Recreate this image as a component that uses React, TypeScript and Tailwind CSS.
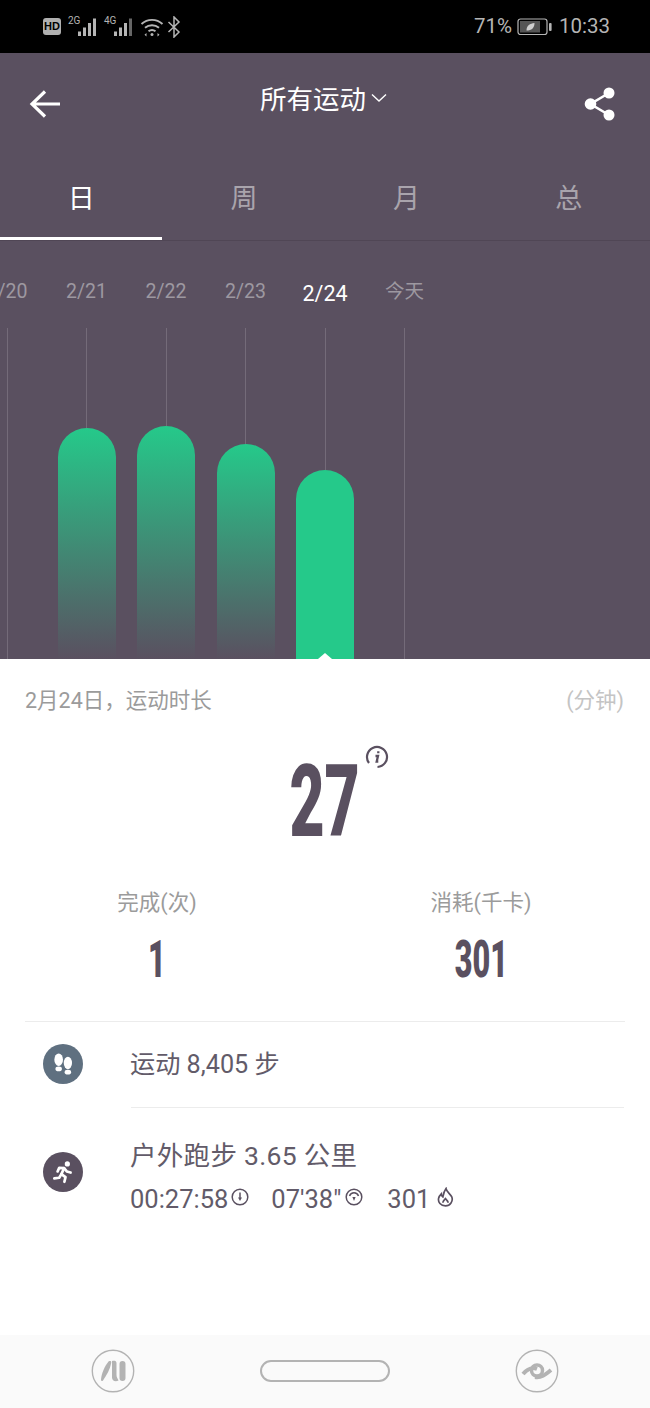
import React from "react";

const FONT = "font-['Roboto','Noto_Sans_CJK_SC',sans-serif]";

type Day = { label: string; bar?: number; active?: boolean };

const days: Day[] = [
  { label: "2/20" },
  { label: "2/21", bar: 231 },
  { label: "2/22", bar: 233 },
  { label: "2/23", bar: 215 },
  { label: "2/24", bar: 189, active: true },
  { label: "今天" },
];

function Signal({ tag, dim }: { tag: string; dim?: boolean }) {
  return (
    <div className="flex items-end h-[20px] relative w-[30px]">
      <span className="absolute left-0 -top-[1px] text-[10px] leading-[10px] text-[#b5b5b5] font-['Liberation_Sans_Narrow','Roboto',sans-serif]">
        {tag}
      </span>
      <svg width="30" height="20" viewBox="0 0 30 20" fill="#b5b5b5">
        <rect x="10" y="14.500" width="3" height="4.500" />
        <rect x="15" y="10.500" width="3" height="8.500" />
        <rect x="20" y="6" width="3" height="13" />
        <rect x="25" y="1.500" width="3" height="17.500" fill={dim ? "#666" : "#b5b5b5"} />
      </svg>
    </div>
  );
}

function StatusBar() {
  return (
    <div className="h-[53px] bg-black flex items-center justify-between pl-[43px] pr-[40px] text-[#b5b5b5]">
      <div className="flex items-center">
        <span className="w-[18px] h-[17px] bg-[#b0b0b0] rounded-[3px] text-black text-[11px] leading-[17px] font-bold text-center font-['Liberation_Sans',sans-serif]">
          HD
        </span>
        <div className="ml-[7px] flex gap-[6px]">
          <Signal tag="2G" />
          <Signal tag="4G" dim />
        </div>
        <svg className="ml-[6px]" width="24" height="20" viewBox="0 0 24 20" fill="none" stroke="#b5b5b5" strokeWidth="1.900">
          <path d="M1.500 7c6-5.500 15-5.500 21 0" />
          <path d="M5 10.800c4-3.500 10-3.500 14 0" />
          <path d="M8.500 14.300c2-1.600 5-1.600 7 0" />
          <circle cx="12" cy="17.500" r="1.500" fill="#b5b5b5" stroke="none" />
          <path d="M17.500 16l2 1.700-2 1.700zM6.500 16l-2 1.700 2 1.700z" fill="#b5b5b5" stroke="none" />
        </svg>
        <svg className="ml-[3px]" width="14" height="22" viewBox="0 0 14 22" fill="none" stroke="#b5b5b5" strokeWidth="1.500">
          <path d="M1.500 6l10.500 10-5 5V1l5 5L1.500 16" />
        </svg>
      </div>
      <div className="flex items-center text-[20.500px] leading-none">
        <span>71%</span>
        <svg className="ml-[5px]" width="36" height="18" viewBox="0 0 36 18">
          <rect x="1" y="1" width="29" height="15.500" rx="2.500" fill="none" stroke="#b5b5b5" strokeWidth="1.200" />
          <rect x="3" y="3" width="20" height="11.500" fill="#555" />
          <rect x="32" y="5" width="2.600" height="8" rx="1" fill="#b5b5b5" />
          <path d="M9.500 12.500c0-5 3.500-7 8-7.500 0 5-3 7.500-8 7.500z" fill="#cfcfcf" />
        </svg>
        <span className="ml-[6px]">10:33</span>
      </div>
    </div>
  );
}

function TitleBar() {
  return (
    <div className="h-[100px] flex items-start justify-between pt-[29px] pl-[29px] pr-[34px]">
      <svg width="32" height="44" viewBox="0 0 32 44" fill="none" stroke="#fff" strokeWidth="3.200">
        <path d="M31 22H4M16 9.500L3 22l13 12.500" />
      </svg>
      <div className="flex items-center text-white text-[26.500px] leading-[36px] ml-[2px]">
        <span>所有运动</span>
        <svg className="ml-[5px] -mt-[4px]" width="16" height="10" viewBox="0 0 16 10" fill="none" stroke="#fff" strokeWidth="1.400">
          <path d="M1 1.500l7 6.500 7-6.500" />
        </svg>
      </div>
      <svg width="32" height="36" viewBox="0 0 32 36" fill="#fff" stroke="#fff" className="mt-[4px]">
        <circle cx="6.500" cy="18" r="5.800" stroke="none" />
        <circle cx="25" cy="7" r="5.500" stroke="none" />
        <circle cx="25" cy="29" r="5.500" stroke="none" />
        <path d="M25 7L6.500 18 25 29" fill="none" strokeWidth="2.600" />
      </svg>
    </div>
  );
}

function Tabs() {
  const tabs = ["日", "周", "月", "总"];
  return (
    <div className="flex h-[88px] border-b border-[#504655]">
      {tabs.map((t, i) => (
        <div
          key={t}
          className={`flex-1 h-[87px] flex items-start justify-center pt-[28px] text-[27px] leading-[36px] ${
            i === 0 ? "text-white border-b-[3px] border-white mr-[0.5px]" : "text-[#a9a4ac]"
          }`}
        >
          {t}
        </div>
      ))}
    </div>
  );
}

function Chart() {
  return (
    <div className="h-[418px] overflow-hidden">
      <div className="flex -ml-[32.750px] w-[700px] h-full">
        {days.map((d) => (
          <div key={d.label} className="w-[79.500px] flex flex-col items-center h-full">
            <div
              className={`h-[87px] flex items-start whitespace-nowrap ${
                d.active
                  ? "text-white text-[21.500px] leading-[29px] pt-[38px]"
                  : "text-[#9d98a0] text-[19.500px] leading-[27px] pt-[37px]"
              }`}
            >
              {d.label}
            </div>
            <div className="flex-1 w-px bg-[#746b79]" />
            {d.bar !== undefined && (
              <div
                className={`w-[58px] rounded-t-[29px] relative ${
                  d.active ? "bg-[#25c98a]" : "bg-linear-to-b/srgb from-[#25c98a] to-[#5a5060]"
                }`}
                style={{ height: d.bar }}
              >
                {d.active && (
                  <div className="absolute bottom-0 left-[22px] w-0 h-0 border-x-[7px] border-x-transparent border-b-[6px] border-b-white" />
                )}
              </div>
            )}
          </div>
        ))}
      </div>
    </div>
  );
}

function Condensed({ children, className }: { children: React.ReactNode; className: string }) {
  return (
    <span className={`inline-block font-black text-[#5a5060] origin-center font-['Roboto',sans-serif] ${className}`}>
      {children}
    </span>
  );
}

function Summary() {
  return (
    <div className="flex-1 bg-white">
      <div className="flex justify-between pl-[25px] pr-[26px] pt-[26px] text-[21.500px] leading-[32px]">
        <span className="text-[#9b9b9b]">2月24日，运动时长</span>
        <span className="text-[#c4c4c4]">(分钟)</span>
      </div>
      <div className="flex justify-center h-[116px] mt-[27px] relative">
        <Condensed className="text-[101px] leading-[116px] scale-x-[0.6]">27</Condensed>
        <svg className="absolute left-[365px] top-[1px]" width="24" height="24" viewBox="0 0 24 24" fill="none" stroke="#5a5060" strokeWidth="2.200">
          <path d="M4 18A10 10 0 1 1 12.500 22" />
          <path d="M10.500 11h2.500l-1.300 5.500h1.600M13.300 6.300v2" strokeWidth="2.300" />
        </svg>
      </div>
      <div className="flex mt-[27px] h-[135px] border-b border-[#ececec] mx-[25px]">
        <div className="flex flex-col items-center w-[264px]">
          <span className="text-[21.500px] leading-[32px] text-[#9b9b9b]">完成(次)</span>
          <Condensed className="mt-[11px] text-[51px] leading-[60px] scale-x-[0.6]">1</Condensed>
        </div>
        <div className="flex flex-col items-center ml-[49px] w-[286px]">
          <span className="text-[21.500px] leading-[32px] text-[#9b9b9b]">消耗(千卡)</span>
          <Condensed className="mt-[11px] text-[51px] leading-[60px] scale-x-[0.6]">301</Condensed>
        </div>
      </div>
      <div className="flex h-[85px] items-center pl-[43px]">
        <div className="w-[40px] h-[40px] rounded-full bg-[#5f7080] flex items-center justify-center -mt-[1px]">
          <svg width="26" height="26" viewBox="0 0 24 24" fill="#fff">
            <ellipse cx="8" cy="8" rx="4" ry="5.800" />
            <ellipse cx="8" cy="16.500" rx="3" ry="2.200" />
            <ellipse cx="16.500" cy="11" rx="3.800" ry="5.800" />
            <ellipse cx="16.500" cy="19.500" rx="3" ry="2.200" />
          </svg>
        </div>
        <span className="ml-[47px] mt-[1px] text-[25.200px] leading-[32px] text-[#625b69]">运动 8,405 步</span>
      </div>
      <div className="ml-[131px] mr-[26px] h-px bg-[#ececec]" />
      <div className="flex items-center pl-[43px] pt-[30px]">
        <div className="w-[40px] h-[40px] rounded-full bg-[#5a5060] flex items-center justify-center -mt-[8px] shrink-0">
          <svg width="26" height="26" viewBox="0 0 24 24" fill="none" stroke="#fff" strokeWidth="2.500" strokeLinecap="round" strokeLinejoin="round">
            <circle cx="16" cy="4.500" r="2.400" fill="#fff" stroke="none" />
            <path d="M13 8.500l-2.500 5.500 3.800 2.800-1 4.200" />
            <path d="M10.500 14l-2 3.300-4.500.5" />
            <path d="M7 11.500l1.500-3.300 4.500.3 2.500 3 3.500 1" />
          </svg>
        </div>
        <div className="ml-[47px] flex flex-col">
          <span className="text-[26.500px] leading-[36px] text-[#625b69] tracking-[0.3px]">户外跑步 3.65 公里</span>
          <div className="flex items-center mt-[10px] text-[25.500px] leading-[30px] text-[#625b69]">
            <span>00:27:58</span>
            <svg className="ml-[3px] -mt-[4px]" width="18" height="18" viewBox="0 0 18 18" fill="none" stroke="#5a5060" strokeWidth="1.500">
              <circle cx="9" cy="9" r="7.800" />
              <path d="M9 4.500v6" />
              <path d="M7 9.500L9 13l2-3.500z" fill="#5a5060" stroke="none" />
            </svg>
            <span className="ml-[22px]">07'38"</span>
            <svg className="ml-[4px] -mt-[4px]" width="18" height="18" viewBox="0 0 18 18" fill="none" stroke="#5a5060" strokeWidth="1.500">
              <circle cx="9" cy="9" r="7.800" />
              <path d="M4.500 8a4.800 4.800 0 0 1 9 0" />
              <path d="M7.400 9L9 13l1.600-4z" fill="#5a5060" stroke="none" />
            </svg>
            <span className="ml-[24px]">301</span>
            <svg className="ml-[6px] -mt-[3px]" width="19" height="21" viewBox="0 0 18 20" fill="none" stroke="#5a5060" strokeWidth="1.600">
              <path d="M9.500 1.500c.5 3 4 5 5.500 8 1.500 4-1.500 8.500-6 8.500s-7.500-3.500-6.500-7.500c.5-2 1.500-3 2.500-4 0 1.500.5 2.500 1.500 3 .5-3 1.500-6 3-8z" />
              <path d="M6.500 15c0-1.800 1.500-2.500 2.500-4 1.500 1.500 2.500 2.500 2.500 4" />
            </svg>
          </div>
        </div>
      </div>
    </div>
  );
}

function BottomNav() {
  return (
    <div className="h-[73px] bg-[#fafafa] flex items-center justify-between px-[91px] pb-[1px]">
      <svg width="44" height="44" viewBox="0 0 44 44" fill="#b3b3b3">
        <circle cx="22" cy="22" r="20.700" fill="none" stroke="#b3b3b3" strokeWidth="1.400" />
        <path d="M17.500 12.500c1.800-1 3-.5 2.700 1.500-1 6-4.500 12-8.200 17.500-1 1-2 .5-2-1 .5-6 3.500-13 7.500-18z" />
        <path d="M21 12c2-.5 4.500-.5 4.500 2v12c0 2 1 3.500 2 5.500-3 1.500-6.500 .5-6.500-3z" />
        <rect x="28.500" y="12" width="6" height="20" rx="3" />
      </svg>
      <div className="w-[130px] h-[22px] rounded-[11px] border-[2px] border-[#b3b3b3]" />
      <svg width="44" height="44" viewBox="0 0 44 44" fill="none" stroke="#b3b3b3">
        <circle cx="22" cy="22" r="20.700" strokeWidth="1.400" />
        <path d="M8 25c5-6 9-7 14-5" strokeWidth="4" />
        <circle cx="22" cy="21.500" r="5.500" strokeWidth="3.500" />
        <path d="M20 28c6 1 10-2 16-7" strokeWidth="4" />
      </svg>
    </div>
  );
}

export default function App() {
  return (
    <div className={`w-[650px] h-[1408px] flex flex-col overflow-hidden bg-white ${FONT}`}>
      <StatusBar />
      <div className="bg-[#5a5060]">
        <TitleBar />
        <Tabs />
        <Chart />
      </div>
      <Summary />
      <BottomNav />
    </div>
  );
}
